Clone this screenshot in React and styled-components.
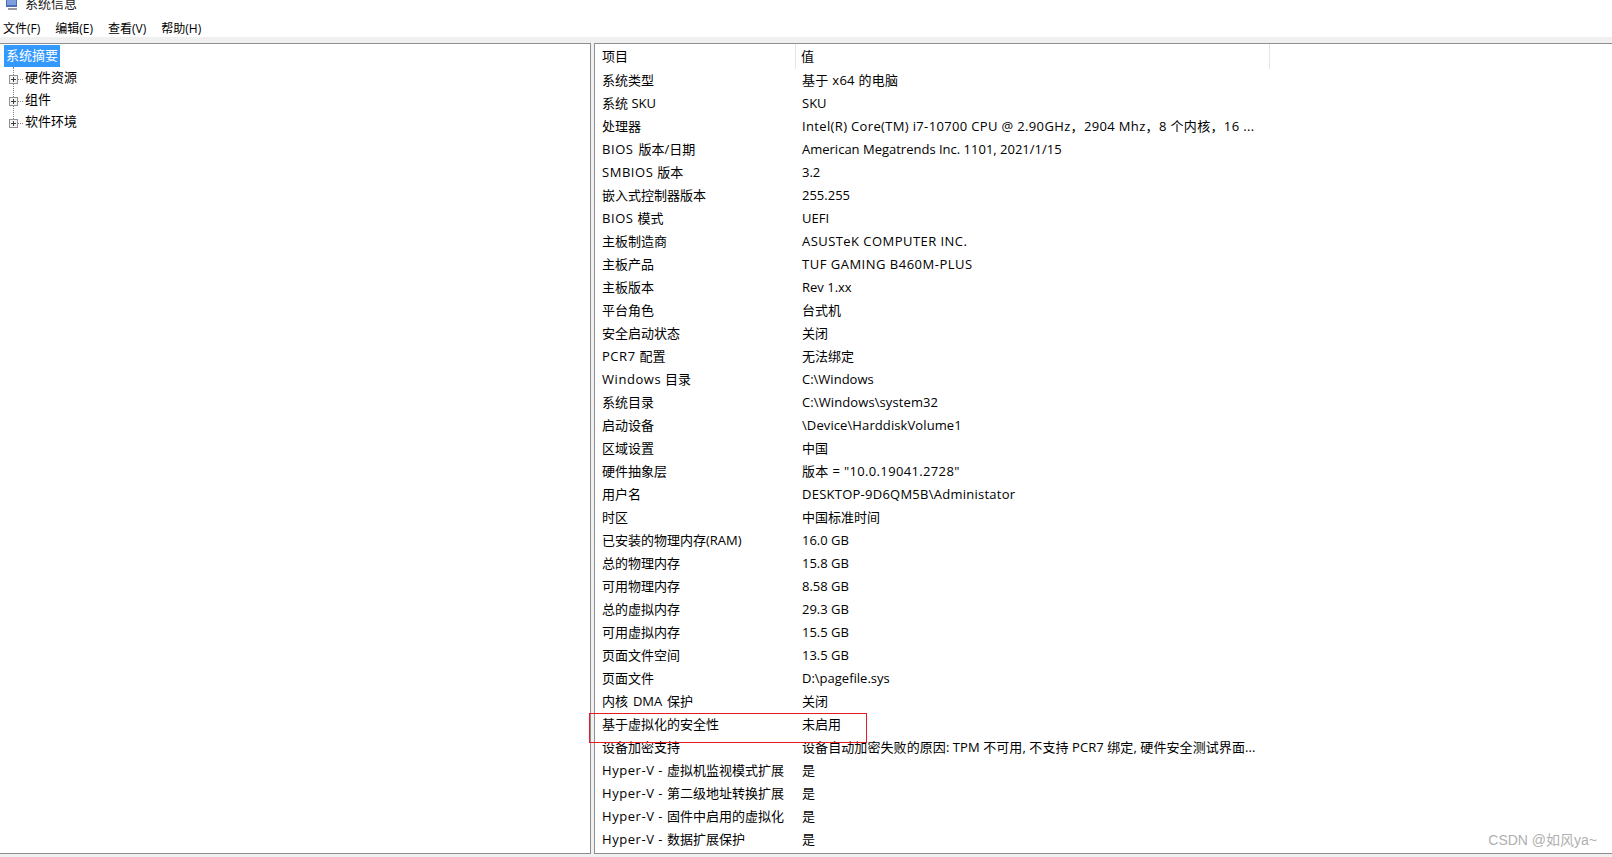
import React from "react";
import styled, { createGlobalStyle } from "styled-components";

// lead is the latin start of an item, set a little wider like the original UI font
const rows = [
  { item: "系统类型", value: "基于 x64 的电脑", track: 0.3 },
  { item: "系统 SKU", value: "SKU" },
  { item: "处理器", value: "Intel(R) Core(TM) i7-10700 CPU @ 2.90GHz，2904 Mhz，8 个内核，16 ...", track: 0.35 },
  { lead: "BIOS ", item: "版本/日期", value: "American Megatrends Inc. 1101, 2021/1/15", gap: 1 },
  { lead: "SMBIOS ", item: "版本", value: "3.2" },
  { item: "嵌入式控制器版本", value: "255.255" },
  { lead: "BIOS ", item: "模式", value: "UEFI" },
  { item: "主板制造商", value: "ASUSTeK COMPUTER INC.", track: 0.45 },
  { item: "主板产品", value: "TUF GAMING B460M-PLUS", track: 0.5 },
  { item: "主板版本", value: "Rev 1.xx" },
  { item: "平台角色", value: "台式机" },
  { item: "安全启动状态", value: "关闭" },
  { lead: "PCR7 ", item: "配置", value: "无法绑定" },
  { lead: "Windows ", item: "目录", value: "C:\\Windows" },
  { item: "系统目录", value: "C:\\Windows\\system32", track: 0.1 },
  { item: "启动设备", value: "\\Device\\HarddiskVolume1", track: 0.1 },
  { item: "区域设置", value: "中国" },
  { item: "硬件抽象层", value: "版本 = \"10.0.19041.2728\"", track: 0.35 },
  { item: "用户名", value: "DESKTOP-9D6QM5B\\Administator", track: 0.25 },
  { item: "时区", value: "中国标准时间" },
  { item: "已安装的物理内存(RAM)", value: "16.0 GB" },
  { item: "总的物理内存", value: "15.8 GB" },
  { item: "可用物理内存", value: "8.58 GB" },
  { item: "总的虚拟内存", value: "29.3 GB" },
  { item: "可用虚拟内存", value: "15.5 GB" },
  { item: "页面文件空间", value: "13.5 GB" },
  { item: "页面文件", value: "D:\\pagefile.sys" },
  { item: "内核 DMA 保护", value: "关闭", gap: 1.5 },
  { item: "基于虚拟化的安全性", value: "未启用" },
  { item: "设备加密支持", value: "设备自动加密失败的原因: TPM 不可用, 不支持 PCR7 绑定, 硬件安全测试界面...", track: 0.08 },
  { lead: "Hyper-V - ", item: "虚拟机监视模式扩展", value: "是" },
  { lead: "Hyper-V - ", item: "第二级地址转换扩展", value: "是" },
  { lead: "Hyper-V - ", item: "固件中启用的虚拟化", value: "是" },
  { lead: "Hyper-V - ", item: "数据扩展保护", value: "是" },
];

const GlobalStyle = createGlobalStyle`
  html, body {
    margin: 0;
    padding: 0;
    height: 100%;
    overflow: hidden;
  }
`;

const Window = styled.div`
  width: 1612px;
  height: 857px;
  display: flex;
  flex-direction: column;
  background: #fff;
  color: #000;
  font-family: "Open Sans", "Noto Sans CJK SC", sans-serif;
  font-size: 13px;
  position: relative;
  overflow: hidden;
`;

const TitleBar = styled.div`
  height: 17px;
  flex: none;
  display: flex;
  align-items: flex-start;
  gap: 6px;
  padding-left: 5px;
`;

const TitleIcon = styled.svg`
  width: 14px;
  height: 11px;
  flex: none;
`;

const TitleText = styled.span`
  line-height: 6px;
  color: #222;
`;

const MenuBar = styled.div`
  height: 20px;
  flex: none;
  display: flex;
  gap: 15px;
  padding-left: 3px;
  line-height: 23px;
  font-size: 12px;
`;

const Panes = styled.div`
  flex: 1;
  display: grid;
  grid-template-columns: 591px 1fr;
  column-gap: 3px;
  background: #f0f0f0;
  padding: 6px 0 3px;
`;

const TreePane = styled.div`
  background: #fff;
  border-top: 1px solid #8e8e94;
  border-right: 1px solid #8e8e94;
  border-bottom: 1px solid #8e8e94;
  padding: 1px 0 0 4px;
`;

const Selected = styled.div`
  width: 56px;
  height: 22px;
  line-height: 21px;
  background: #3399ff;
  color: #fff;
  padding-left: 2px;
  box-sizing: border-box;
`;

const TreeList = styled.div`
  position: relative;
  margin-left: 5px;
`;

const DottedTrunk = styled.div`
  position: absolute;
  left: 4px;
  top: 0;
  height: 56px;
  border-left: 1px dotted #808080;
`;

const TreeItem = styled.div`
  height: 22px;
  display: flex;
  align-items: center;
  position: relative;
`;

const TreeLabel = styled.span`
  padding-bottom: 4px;
`;

const Expander = styled.svg`
  width: 9px;
  height: 9px;
  flex: none;
  margin-top: 2px;
`;

const Twig = styled.div`
  width: 5px;
  margin: 2px 2px 0 0;
  border-top: 1px dotted #808080;
`;

const ListPane = styled.div`
  background: #fff;
  border: 1px solid #8e8e94;
  border-right: none;
  position: relative;
`;

const HeaderRow = styled.div`
  height: 25px;
  display: grid;
  grid-template-columns: 201px 474px;
`;

const HeaderCell = styled.div`
  border-right: 1px solid #e5e5e5;
  padding-left: ${(p) => (p.$value ? 5 : 7)}px;
  line-height: 24px;
`;

const Rows = styled.div`
  display: flex;
  flex-direction: column;
`;

const Row = styled.div`
  height: 23px;
  line-height: 23px;
  display: grid;
  grid-template-columns: 201px 474px;
  white-space: nowrap;
`;

const Cell = styled.div`
  padding-left: ${(p) => (p.$value ? 6 : 7)}px;
  letter-spacing: ${(p) => p.$track || 0}px;
  word-spacing: ${(p) => p.$gap || 0}px;
`;

const Lead = styled.span`
  letter-spacing: 0.55px;
`;

const Highlight = styled.div`
  position: absolute;
  left: -6px;
  top: 669px;
  width: 276px;
  height: 28px;
  border: 1px solid #e51c23;
  pointer-events: none;
`;

const Watermark = styled.div`
  position: absolute;
  right: 15px;
  bottom: 4px;
  font-family: "Liberation Sans", "Noto Sans CJK SC", sans-serif;
  font-size: 14px;
  color: #b0b0b0;
`;

function ExpanderIcon() {
  return (
    <Expander viewBox="0 0 9 9">
      <rect x="0.5" y="0.5" width="8" height="8" fill="#f4f4f4" stroke="#919191" />
      <path d="M2 4.5h5M4.5 2v5" stroke="#3c3c3c" />
    </Expander>
  );
}

export default function App() {
  return (
    <Window>
      <GlobalStyle />
      <TitleBar>
        <TitleIcon viewBox="0 0 14 11">
          <rect x="1" y="0" width="11" height="7" fill="#4a6fb5" />
          <rect x="2" y="0" width="9" height="5" fill="#7f9fdc" />
          <rect x="3" y="8" width="9" height="2" fill="#9a9aa2" />
        </TitleIcon>
        <TitleText>系统信息</TitleText>
      </TitleBar>
      <MenuBar>
        <span>文件(F)</span>
        <span>编辑(E)</span>
        <span>查看(V)</span>
        <span>帮助(H)</span>
      </MenuBar>
      <Panes>
        <TreePane>
          <Selected>系统摘要</Selected>
          <TreeList>
            <DottedTrunk />
            {["硬件资源", "组件", "软件环境"].map((name) => (
              <TreeItem key={name}>
                <ExpanderIcon />
                <Twig />
                <TreeLabel>{name}</TreeLabel>
              </TreeItem>
            ))}
          </TreeList>
        </TreePane>
        <ListPane>
          <HeaderRow>
            <HeaderCell>项目</HeaderCell>
            <HeaderCell $value>值</HeaderCell>
          </HeaderRow>
          <Rows>
            {rows.map((row) => (
              <Row key={(row.lead || "") + row.item}>
                <Cell $gap={row.gap}>
                  {row.lead && <Lead>{row.lead}</Lead>}
                  {row.item}
                </Cell>
                <Cell $value $track={row.track}>{row.value}</Cell>
              </Row>
            ))}
          </Rows>
          <Highlight />
          <Watermark>CSDN @如风ya~</Watermark>
        </ListPane>
      </Panes>
    </Window>
  );
}
